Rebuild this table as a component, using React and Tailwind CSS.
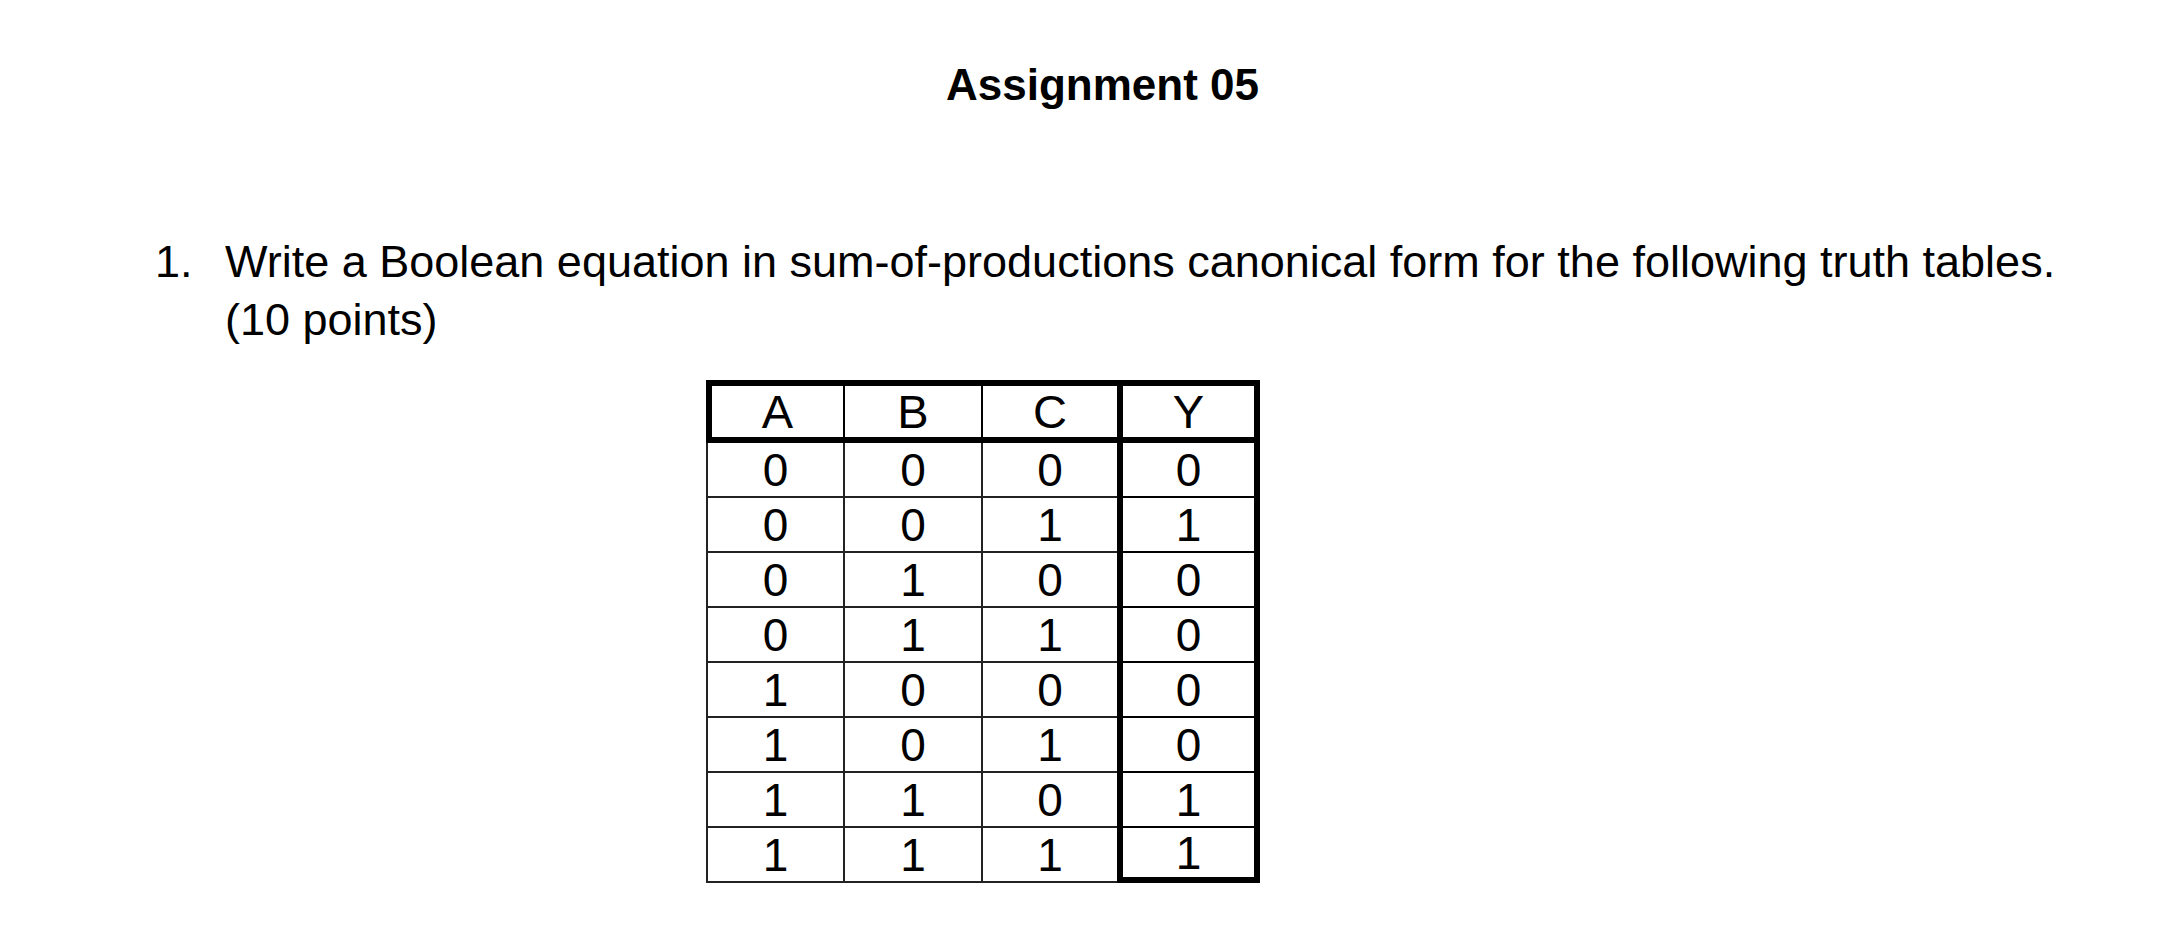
import React from "react";

const rows = [
  ["0", "0", "0", "0"],
  ["0", "0", "1", "1"],
  ["0", "1", "0", "0"],
  ["0", "1", "1", "0"],
  ["1", "0", "0", "0"],
  ["1", "0", "1", "0"],
  ["1", "1", "0", "1"],
  ["1", "1", "1", "1"],
];

export default function App() {
  return (
    <div
      className="w-[2160px] h-[946px] bg-white text-black overflow-hidden"
      style={{ fontFamily: '"Liberation Sans", Arial, sans-serif' }}
    >
      <div className="pt-[61px] pl-[946px]">
        <h1 className="text-[44px] leading-[48px] font-bold">Assignment 05</h1>
      </div>

      <div className="mt-[124px] pl-[155px] flex text-[45px] leading-[58px]">
        <span className="w-[70px] shrink-0">1.</span>
        <div>
          <p>Write a Boolean equation in sum-of-productions canonical form for the following truth tables.</p>
          <p>(10 points)</p>
        </div>
      </div>

      <div className="mt-[31px] ml-[706px] w-[554px]">
        <div className="grid grid-cols-[133px_138px_140px_131px] h-[63px] border-[6px] border-black text-[47px] leading-none">
          <div className="flex items-center justify-center border-r-2 border-black">A</div>
          <div className="flex items-center justify-center border-r-2 border-black">B</div>
          <div className="flex items-center justify-center border-r-[6px] border-black">C</div>
          <div className="flex items-center justify-center">Y</div>
        </div>
        {rows.map((r, i) => (
          <div key={i} className="grid grid-cols-[139px_138px_134px_143px] h-[55px] text-[46px] leading-none">
            <div className="flex items-center justify-center border-l-2 border-b-2 border-r-2 border-[#222]">{r[0]}</div>
            <div className="flex items-center justify-center border-b-2 border-r-2 border-[#222]">{r[1]}</div>
            <div className="flex items-center justify-center border-b-2 border-[#222]">{r[2]}</div>
            <div
              className={
                "flex items-center justify-center border-l-[6px] border-r-[6px] border-black " +
                (i === rows.length - 1 ? "border-b-[6px]" : "border-b-2")
              }
            >
              {r[3]}
            </div>
          </div>
        ))}
      </div>
    </div>
  );
}
